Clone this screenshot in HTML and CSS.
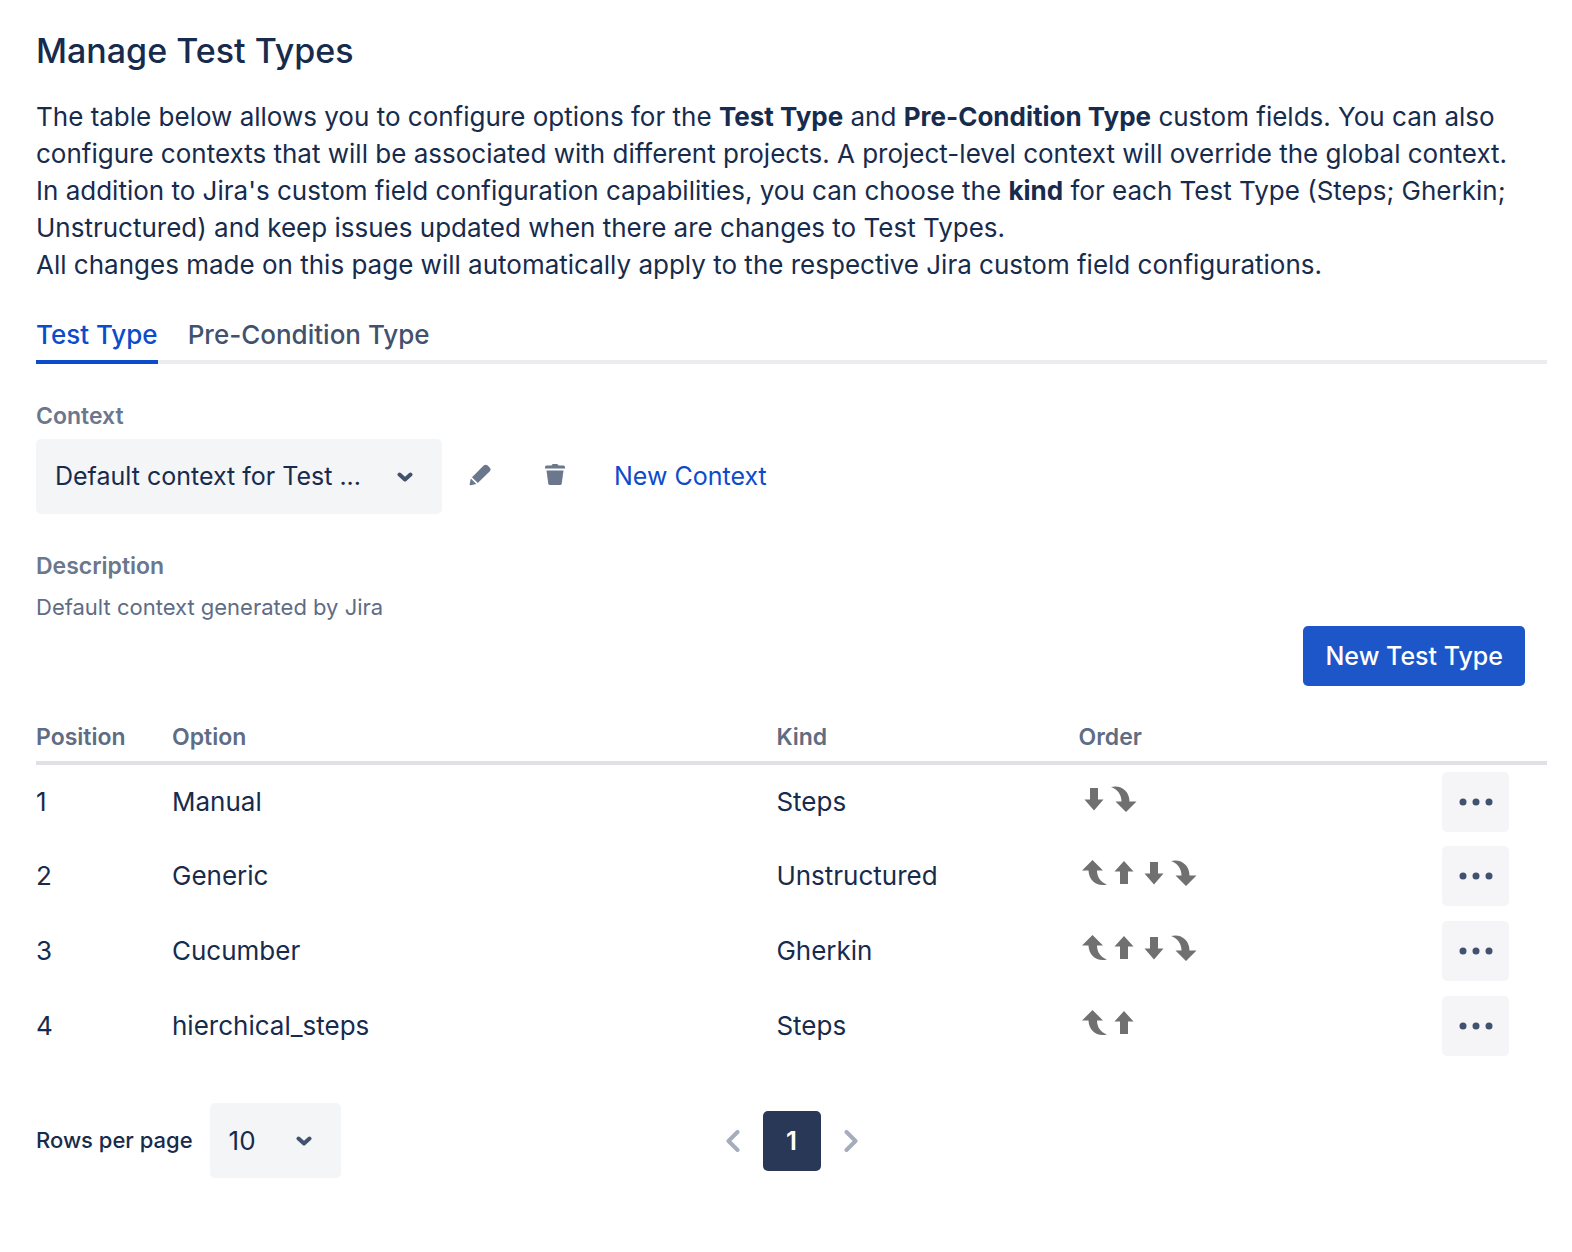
FILE: index.html
```
<!DOCTYPE html>
<html lang="en">
<head>
  <meta charset="UTF-8">
  <meta name="viewport" content="width=device-width, initial-scale=1.0">
  <title>Manage Test Types</title>
  <link rel="stylesheet" href="styles.css">
</head>
<body>

  <!-- shared icons -->
  <svg class="sprite" aria-hidden="true">
    <symbol id="chevron" viewBox="0 0 16 10"><path d="M2.500 2.500 8 7.500l5.500-5" fill="none" stroke="currentColor" stroke-width="4" stroke-linecap="round" stroke-linejoin="round"/></symbol>
    <symbol id="up" viewBox="0 0 26 26"><path d="M13 1 22.500 11.500H17V24H9V11.500H3.500z"/></symbol>
    <symbol id="down" viewBox="0 0 26 26"><path d="M9 2h8v11.500h5.500L13 24.500 3.500 13.500H9z"/></symbol>
    <symbol id="first" viewBox="0 0 26 26"><path d="M11.500 0 22 10.500H16C16 17 19.500 22 26 24.500 16 27 8 21 7.500 10.500H1z"/></symbol>
    <symbol id="last" viewBox="0 0 26 26"><path d="M0 1C10-1.500 18.500 5 18.500 15.500H25.500L15 26 4.500 15.500H10.500C10.500 8.500 6.500 3.500 0 1z"/></symbol>
    <symbol id="dots" viewBox="0 0 34 8"><circle cx="4" cy="4" r="3.500"/><circle cx="17" cy="4" r="3.500"/><circle cx="30" cy="4" r="3.500"/></symbol>
  </svg>

  <main class="container">
    <h1>Manage Test Types</h1>
    <p class="intro">
      The table below allows you to configure options for the <b>Test Type</b> and <b>Pre-Condition Type</b> custom fields. You can also
      configure contexts that will be associated with different projects. A project-level context will override the global context.<br>
      In addition to Jira's custom field configuration capabilities, you can choose the <b>kind</b> for each Test Type (Steps; Gherkin; Unstructured) and keep issues updated when there are changes to Test Types.<br>
      All changes made on this page will automatically apply to the respective Jira custom field configurations.
    </p>

    <nav class="tabs">
      <a href="#" class="tab active">Test Type</a>
      <a href="#" class="tab">Pre-Condition Type</a>
    </nav>

    <label class="field-label" for="context">Context</label>
    <div class="context-row">
      <div class="select context-select">
        <select id="context">
          <option>Default context for Test ...</option>
        </select>
        <svg class="chevron"><use href="#chevron"/></svg>
      </div>
      <button type="button" class="icon-button" aria-label="Edit context">
        <svg width="22" height="22" viewBox="0 0 22 22"><path d="M1.800 14.500 7.300 20 1.800 21.300Q.3 21.500.7 20z"/><path d="M3 13.200 14.700 1.600q2-1.900 4 0l1.900 1.900q1.900 1.900 0 3.900L8.800 19z"/></svg>
      </button>
      <button type="button" class="icon-button" aria-label="Delete context">
        <svg width="22" height="22" viewBox="0 0 22 22"><path d="M1 3Q1 1.500 2.500 1.500H7.500Q8 0 9 0h4q1 0 1.500 1.500h5q1.500 0 1.500 1.500v1.500H1z"/><path d="M2.500 6.500h17L17.700 19.700Q17.500 21 16 21H6Q4.500 21 4.300 19.700z"/></svg>
      </button>
      <a href="#" class="new-context">New Context</a>
    </div>

    <h2 class="field-label">Description</h2>
    <p class="description">Default context generated by Jira</p>

    <div class="actions">
      <button type="button" class="primary">New Test Type</button>
    </div>

    <table>
      <thead>
        <tr>
          <th class="col-position">Position</th>
          <th class="col-option">Option</th>
          <th class="col-kind">Kind</th>
          <th class="col-order">Order</th>
          <th></th>
        </tr>
      </thead>
      <tbody>
        <tr>
          <td>1</td>
          <td>Manual</td>
          <td>Steps</td>
          <td>
            <div class="order">
              <button type="button" aria-label="Move down"><svg><use href="#down"/></svg></button>
              <button type="button" aria-label="Move to last"><svg><use href="#last"/></svg></button>
            </div>
          </td>
          <td class="menu-cell"><button type="button" class="more" aria-label="More"><svg><use href="#dots"/></svg></button></td>
        </tr>
        <tr>
          <td>2</td>
          <td>Generic</td>
          <td>Unstructured</td>
          <td>
            <div class="order">
              <button type="button" aria-label="Move to first"><svg><use href="#first"/></svg></button>
              <button type="button" aria-label="Move up"><svg><use href="#up"/></svg></button>
              <button type="button" aria-label="Move down"><svg><use href="#down"/></svg></button>
              <button type="button" aria-label="Move to last"><svg><use href="#last"/></svg></button>
            </div>
          </td>
          <td class="menu-cell"><button type="button" class="more" aria-label="More"><svg><use href="#dots"/></svg></button></td>
        </tr>
        <tr>
          <td>3</td>
          <td>Cucumber</td>
          <td>Gherkin</td>
          <td>
            <div class="order">
              <button type="button" aria-label="Move to first"><svg><use href="#first"/></svg></button>
              <button type="button" aria-label="Move up"><svg><use href="#up"/></svg></button>
              <button type="button" aria-label="Move down"><svg><use href="#down"/></svg></button>
              <button type="button" aria-label="Move to last"><svg><use href="#last"/></svg></button>
            </div>
          </td>
          <td class="menu-cell"><button type="button" class="more" aria-label="More"><svg><use href="#dots"/></svg></button></td>
        </tr>
        <tr>
          <td>4</td>
          <td>hierchical_steps</td>
          <td>Steps</td>
          <td>
            <div class="order">
              <button type="button" aria-label="Move to first"><svg><use href="#first"/></svg></button>
              <button type="button" aria-label="Move up"><svg><use href="#up"/></svg></button>
            </div>
          </td>
          <td class="menu-cell"><button type="button" class="more" aria-label="More"><svg><use href="#dots"/></svg></button></td>
        </tr>
      </tbody>
    </table>

    <div class="footer">
      <div class="rows">
        <label for="rows">Rows per page</label>
        <div class="select rows-select">
          <select id="rows">
            <option>10</option>
            <option>25</option>
            <option>50</option>
          </select>
          <svg class="chevron"><use href="#chevron"/></svg>
        </div>
      </div>
      <div class="pages">
        <button type="button" class="arrow" aria-label="Previous page"><svg width="14" height="22" viewBox="0 0 14 22"><path d="M11.500 2 2.500 11l9 9"/></svg></button>
        <button type="button" class="page">1</button>
        <button type="button" class="arrow" aria-label="Next page"><svg width="14" height="22" viewBox="0 0 14 22"><path d="M2.500 2l9 9-9 9"/></svg></button>
      </div>
    </div>
  </main>

</body>
</html>
```
FILE: styles.css
```
* {
  box-sizing: border-box;
}

body {
  font-family: Inter, sans-serif;
  font-size: 26px;
  line-height: 37px;
  color: #172b4d;
  background-color: #fff;
  margin: 0;
}

.sprite {
  display: none;
}

.container {
  padding: 32px 25px 32px 36px;
}

h1 {
  font-size: 34px;
  font-weight: 500;
  line-height: 38px;
  margin: 0 0 28px;
}

.intro {
  margin: 0;
}

button,
select {
  font: inherit;
  color: inherit;
  border: none;
  border-radius: 5px;
  cursor: pointer;
}

button {
  display: flex;
  align-items: center;
  justify-content: center;
  padding: 0;
  background: none;
}

svg {
  fill: currentColor;
}

a {
  color: #0c4ccb;
  text-decoration: none;
}

a:hover {
  text-decoration: underline;
}

.tabs {
  display: flex;
  gap: 30px;
  margin-top: 24px;
  box-shadow: inset 0 -4px #ebecf0;
}

.tab {
  height: 57px;
  padding-top: 9px;
  font-weight: 500;
  color: #42526e;
}

.tab.active {
  color: #0c4ccb;
  border-bottom: 4px solid #0c4ccb;
}

.field-label {
  display: block;
  margin: 37px 0 8px;
  font-size: 23px;
  font-weight: 600;
  line-height: 30px;
  color: #6b778c;
}

.context-row {
  display: flex;
  align-items: center;
  font-size: 25px;
}

.select {
  position: relative;
}

.select select {
  appearance: none;
  width: 100%;
  height: 75px;
  padding: 0 19px;
  background-color: #f4f5f7;
}

.context-select {
  width: 406px;
}

.rows-select {
  width: 131px;
}

.chevron {
  position: absolute;
  top: 33px;
  right: 29px;
  width: 16px;
  height: 10px;
  color: #42526e;
  pointer-events: none;
}

.icon-button {
  width: 75px;
  height: 60px;
  padding-bottom: 4px;
  color: #6b778c;
}

.new-context {
  margin-left: 22px;
}

.description {
  margin: 0;
  font-size: 22px;
  line-height: 37px;
  color: #5e6c84;
}

.actions {
  display: flex;
  justify-content: flex-end;
  padding-right: 22px;
}

.primary {
  height: 60px;
  padding: 0 22px;
  font-size: 25px;
  font-weight: 500;
  color: #fff;
  background-color: #1d56c8;
}

table {
  width: 100%;
  margin-top: 28px;
  border-collapse: collapse;
  table-layout: fixed;
}

th {
  height: 49px;
  padding: 0;
  font-size: 23px;
  font-weight: 600;
  text-align: left;
  color: #5e6c84;
  border-bottom: 4px solid #dfe1e6;
}

td {
  height: 75px;
  padding: 0;
}

.col-position {
  width: 9%;
}

.col-option {
  width: 40%;
}

.col-kind,
.col-order {
  width: 20%;
}

.order {
  display: flex;
  gap: 4px;
  padding: 0 0 6px 2px;
}

.order button {
  width: 26px;
  height: 26px;
  color: #707070;
}

.order svg {
  width: 26px;
  height: 26px;
}

.menu-cell {
  padding-right: 38px;
}

.more {
  width: 67px;
  height: 60px;
  margin-left: auto;
  color: #42526e;
  background-color: #f5f5f7;
}

.more svg {
  width: 34px;
  height: 8px;
}

.footer {
  display: grid;
  grid-template-columns: 1fr auto 1fr;
  align-items: center;
  margin-top: 40px;
}

.rows {
  display: flex;
  align-items: center;
  gap: 17px;
  font-size: 22px;
  font-weight: 500;
}

.rows-select {
  font-size: 26px;
  font-weight: 400;
}

.pages {
  display: flex;
  align-items: center;
}

.page {
  width: 58px;
  height: 60px;
  font-weight: 600;
  color: #fff;
  background-color: #293857;
}

.arrow {
  width: 60px;
  height: 60px;
}

.arrow path {
  fill: none;
  stroke: #a5adba;
  stroke-width: 4px;
  stroke-linecap: round;
  stroke-linejoin: round;
}
```
